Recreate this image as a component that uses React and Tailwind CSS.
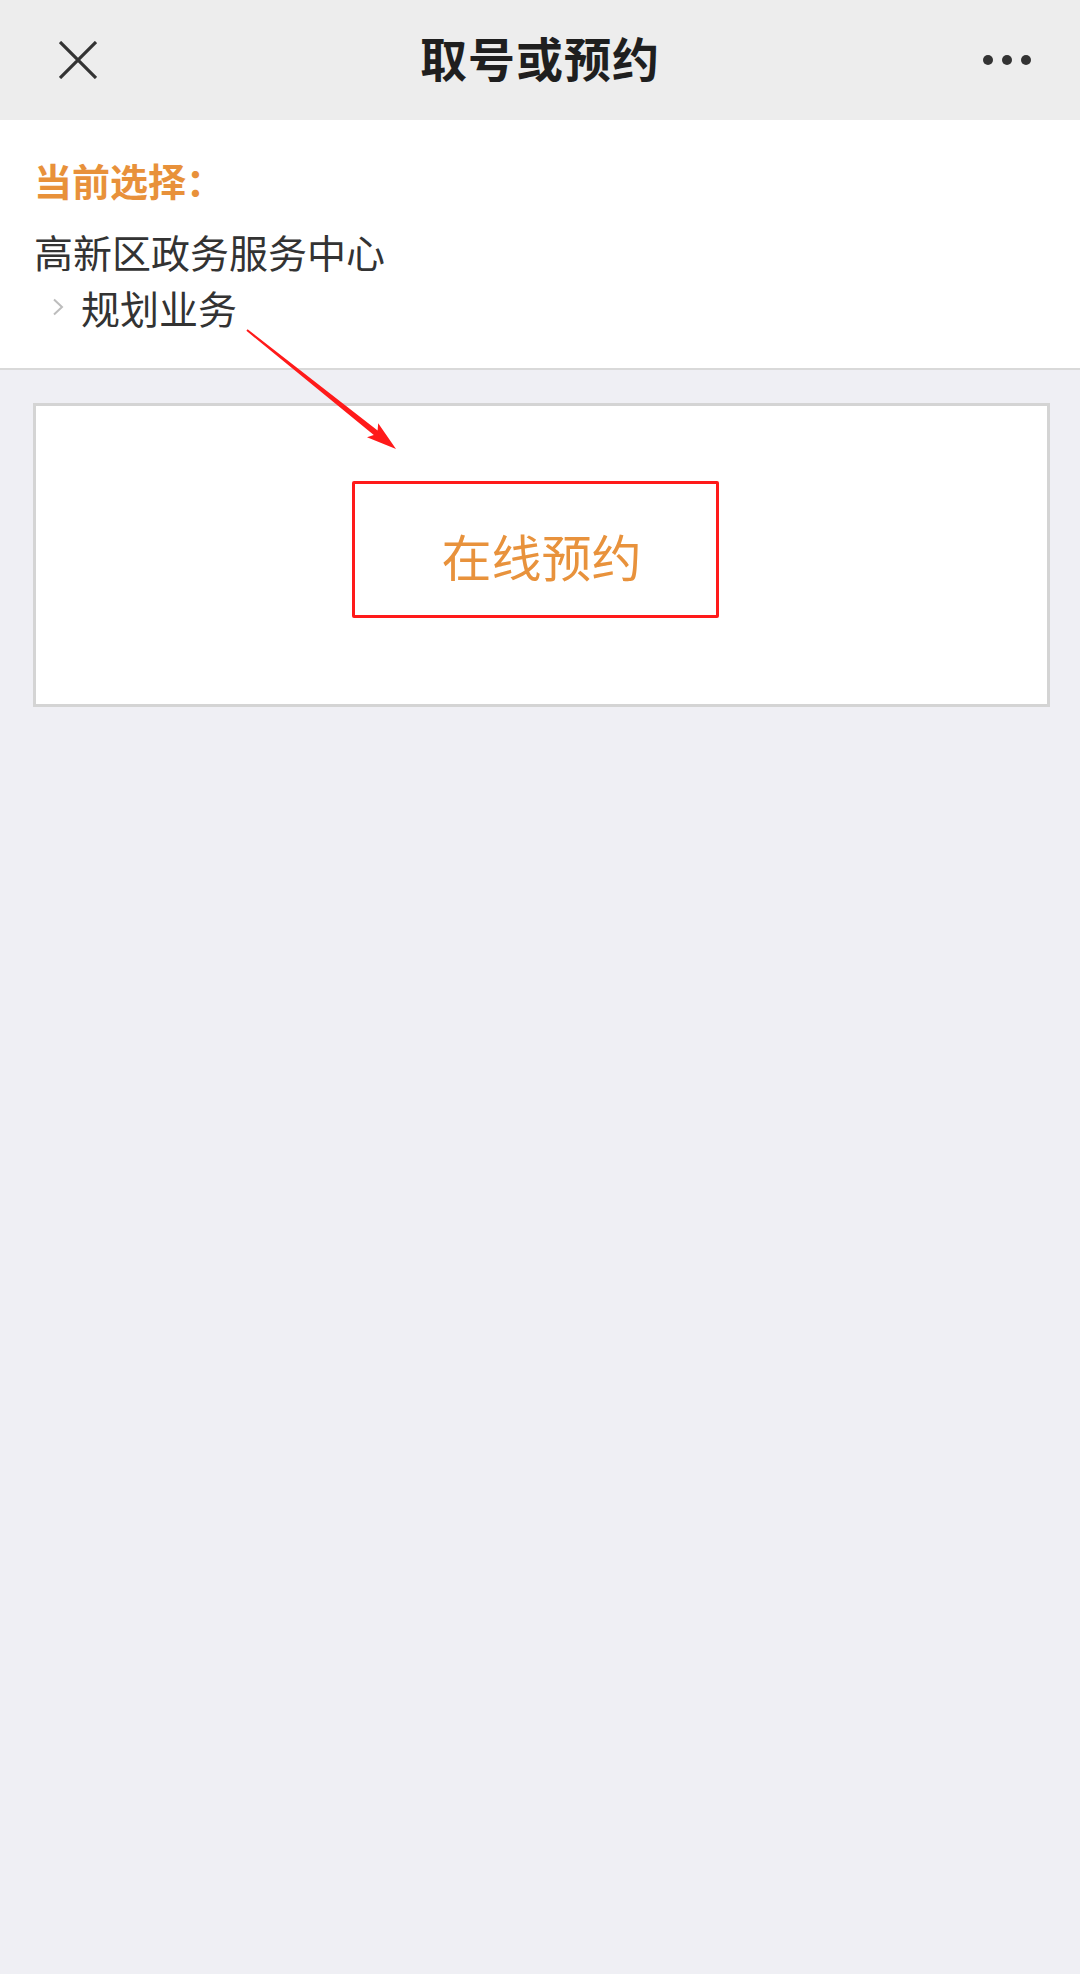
export default function App() {
  const font = { fontFamily: '"Noto Sans CJK SC", "Noto Sans", sans-serif' };
  return (
    <div className="relative min-h-[1974px] w-[1080px] bg-[#efeff4]" style={font}>
      {/* Header */}
      <div className="grid h-[120px] grid-cols-[1fr_auto_1fr] items-center bg-[#ededed]">
        <div className="flex items-center pl-[59px]">
          <svg width="38" height="38" viewBox="0 0 38 38">
            <path d="M1 1 L37 37 M37 1 L1 37" stroke="#333" strokeWidth="3.2" fill="none" />
          </svg>
        </div>
        <div className="pb-[7px] text-[47px] font-bold leading-none tracking-[1px] text-[#1f1f1f]">取号或预约</div>
        <div className="flex justify-end pr-[49px]">
          <svg width="48" height="12" viewBox="0 0 48 12">
            <circle cx="5" cy="6" r="5" fill="#333" />
            <circle cx="24" cy="6" r="5" fill="#333" />
            <circle cx="43" cy="6" r="5" fill="#333" />
          </svg>
        </div>
      </div>

      {/* Current selection */}
      <div className="h-[250px] border-b-2 border-[#d9d9d9] bg-white pl-[34px] pt-[32px]">
        <div className="text-[38px] font-bold leading-[56px] text-[#e8913a]">当前选择：</div>
        <div className="mt-[15px] text-[39px] leading-[56px] text-[#333]">高新区政务服务中心</div>
        <div className="flex h-[56px] items-center">
          <svg className="ml-[18px]" width="12" height="18" viewBox="0 0 12 18">
            <path d="M2 1.5 L10 9 L2 16.5" stroke="#bdbdbd" strokeWidth="2" fill="none" />
          </svg>
          <span className="ml-[17px] text-[39px] leading-[56px] text-[#333]">规划业务</span>
        </div>
      </div>

      {/* Card */}
      <div className="relative ml-[33px] mr-[30px] mt-[33px] flex h-[304px] items-center justify-center border-[3px] border-[#d4d4d4] bg-white">
        <span className="text-[50px] leading-none text-[#e8923c]">在线预约</span>
        <div className="absolute left-[316px] top-[75px] h-[137px] w-[367px] rounded-[2px] border-[3px] border-[#ff1a1a]" />
      </div>

      {/* Annotation arrow */}
      <svg className="pointer-events-none absolute left-0 top-0" width="1080" height="500" viewBox="0 0 1080 500">
        <polygon
          points="246.4,330.8 373.8,435.1 367,437.3 396,449 378.2,423.3 377.6,430.5 247.6,329.2"
          fill="#ff1a1a"
        />
      </svg>
    </div>
  );
}
